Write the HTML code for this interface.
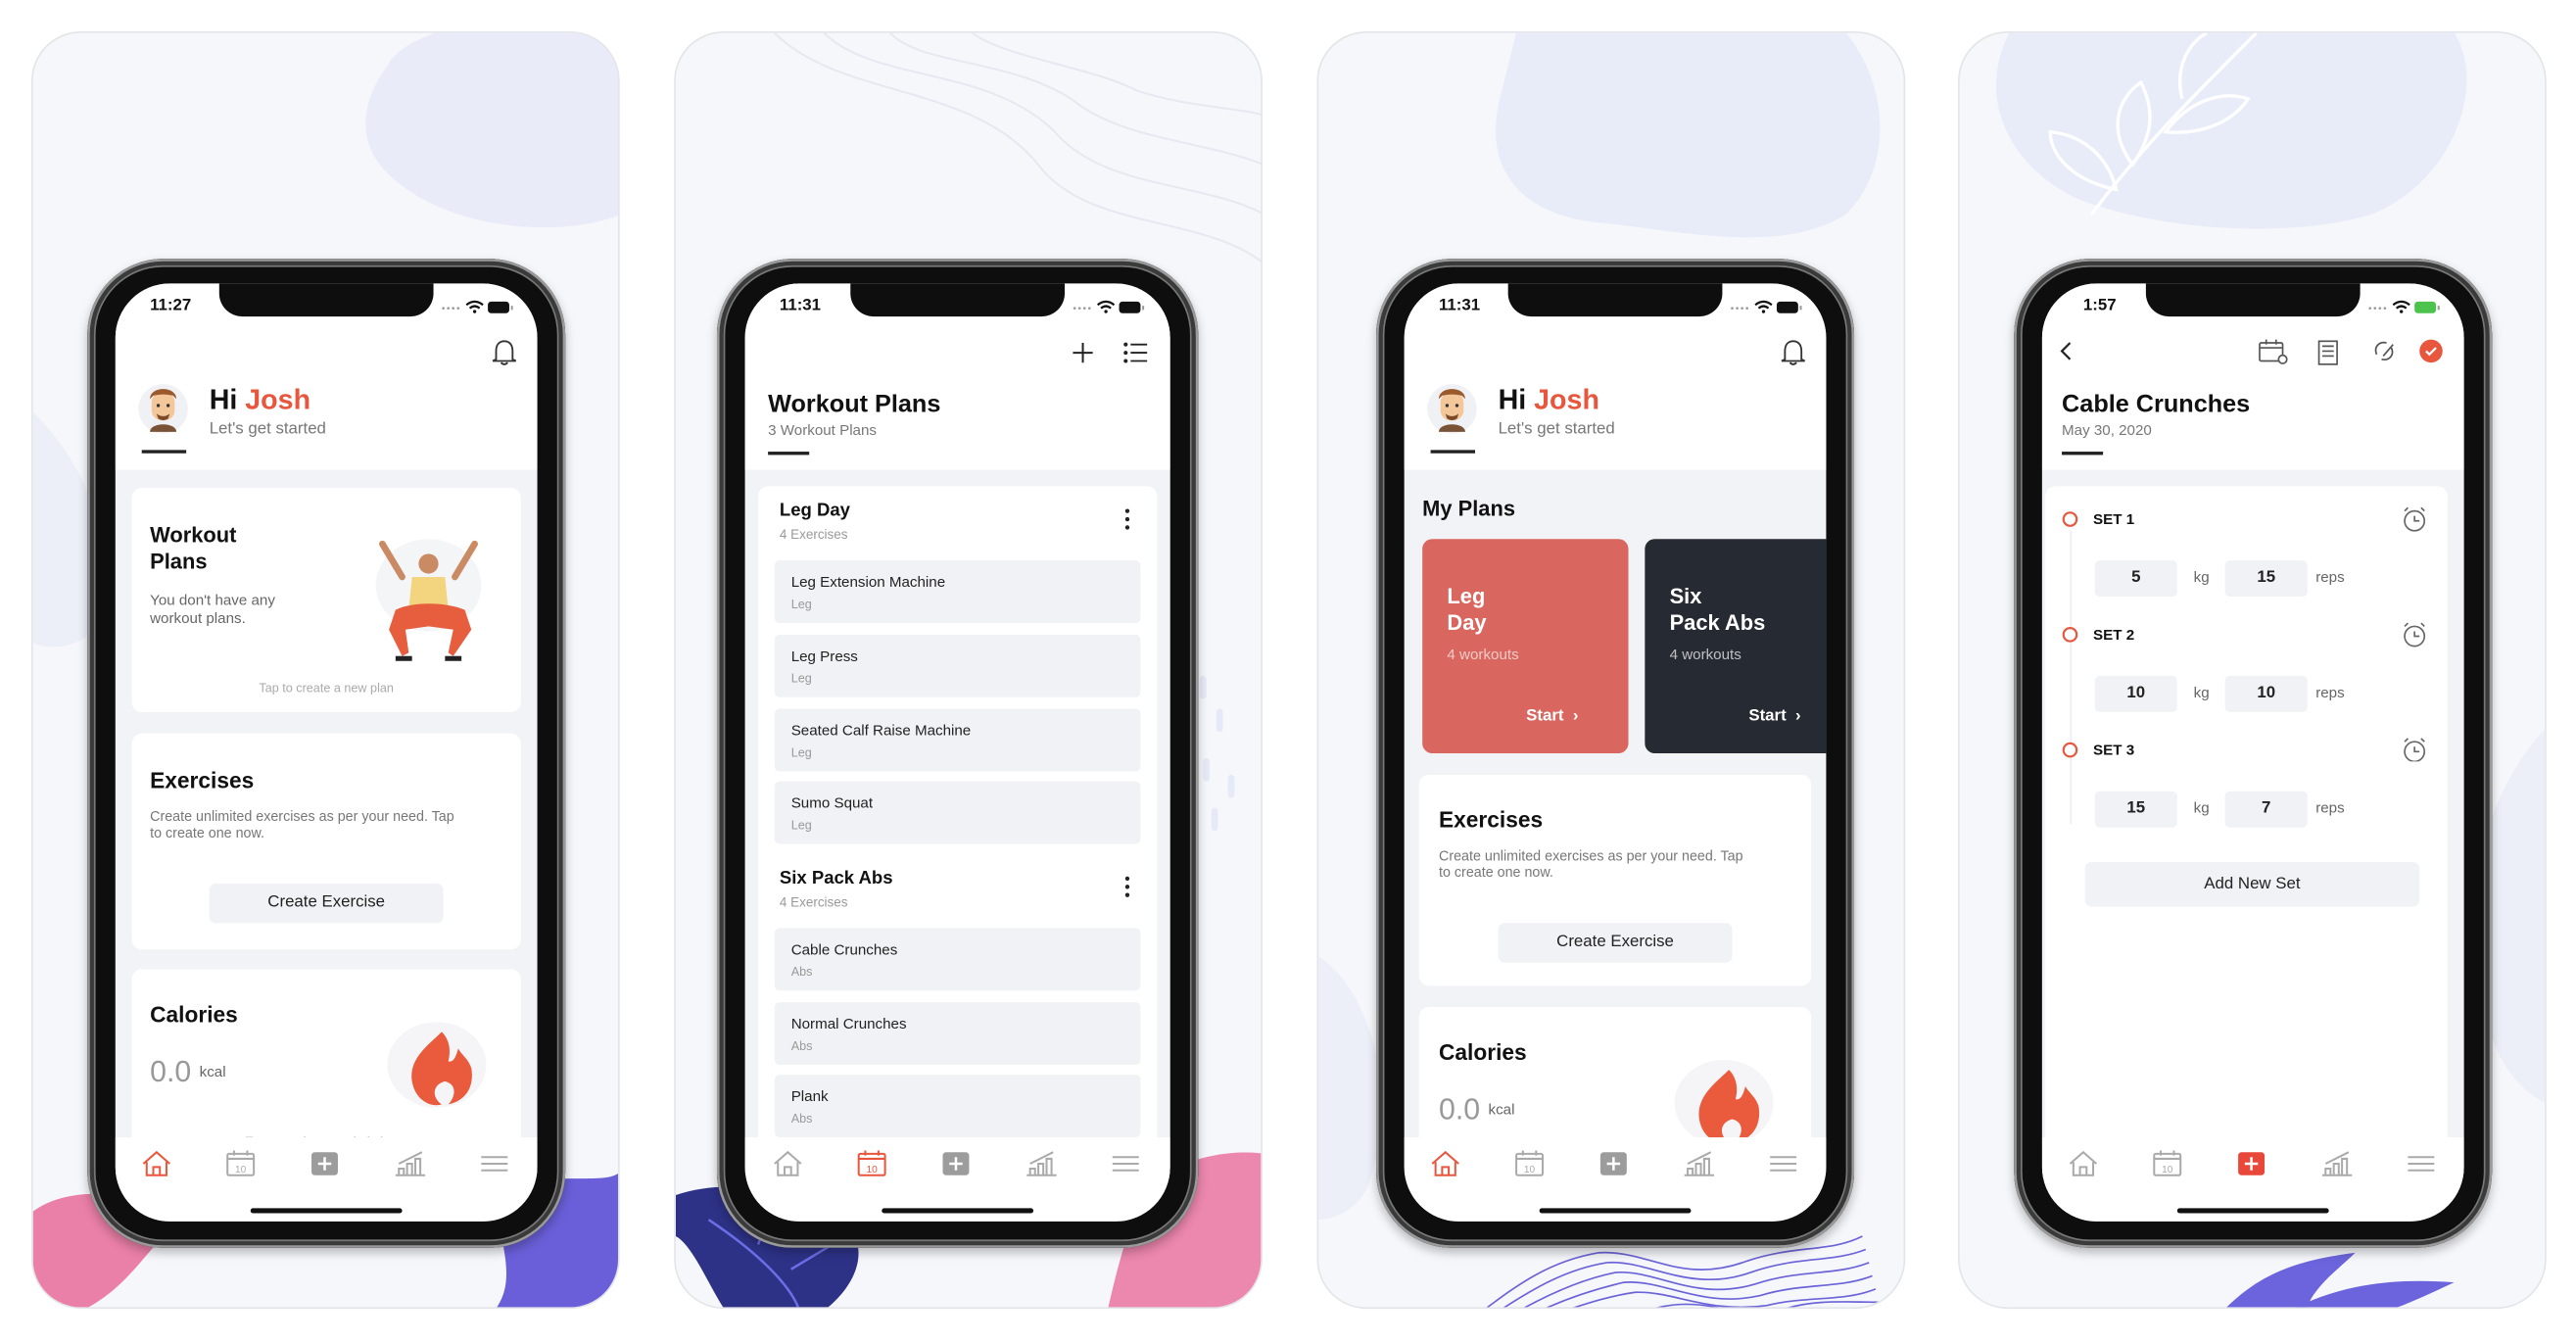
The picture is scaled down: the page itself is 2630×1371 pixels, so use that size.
<!DOCTYPE html>
<html><head><meta charset="utf-8"><style>
*{margin:0;padding:0;box-sizing:border-box}
html,body{width:2630px;height:1370px;overflow:hidden;background:#fff;font-family:"Liberation Sans",sans-serif}
#w{position:absolute;left:0;top:0;width:1563px;height:815px;transform:scale(1.6827);transform-origin:0 0}
.pn{position:absolute;top:19px;width:357px;height:775px;border-radius:30px;background:#f6f7fb;border:1px solid #e4e5ea;overflow:hidden}
.ph{position:absolute;top:157px;width:290px;height:600px;border-radius:46px;background:#0e0e0e;box-shadow:inset 0 0 0 1.5px #9a9a9a,inset 0 0 0 4px #3a3a3a,inset 0 0 0 5px #777,0 3px 6px rgba(0,0,0,.25)}
.sc{position:absolute;left:17px;top:15px;width:256px;height:569px;border-radius:33px;background:#f2f3f7;overflow:hidden}
.a{position:absolute}
.notch{position:absolute;left:63px;top:0;width:130px;height:20px;background:#0e0e0e;border-radius:0 0 14px 14px}
.time{position:absolute;left:21px;top:8px;font-size:10px;font-weight:bold;color:#111}
.hdr{position:absolute;left:0;top:0;width:256px;height:113px;background:#fff}
.card{position:absolute;background:#fff;border-radius:6px}
.b{font-weight:bold;color:#111}
.g{color:#777}
.tab{position:absolute;left:0;top:518px;width:256px;height:51px;background:#fff}
.home{position:absolute;left:82px;top:561px;width:92px;height:3px;border-radius:2px;background:#111}
.item{position:absolute;left:18px;width:222px;height:38px;background:#f1f2f5;border-radius:3px}
.item .n{position:absolute;left:10px;top:8px;font-size:9px;color:#222}
.item .s{position:absolute;left:10px;top:22px;font-size:7.5px;color:#999}
.inp{position:absolute;width:50px;height:22px;background:#f1f2f5;border-radius:3px;font-size:10px;font-weight:bold;color:#222;text-align:center;line-height:22px}
.u{position:absolute;font-size:9px;color:#666}
</style></head><body><div id="w">

<!-- PANEL 1 -->
<div class="pn" style="left:19px">
<svg class="a" style="left:0;top:0" width="357" height="775">
<path d="M215 20 C230 -10 330 -20 357 10 L357 110 C320 125 250 120 215 85 C195 65 200 40 215 20Z" fill="#e9ecf8"/>
<path d="M0 230 C30 260 50 300 40 360 C20 380 0 370 0 370Z" fill="#eceef8"/>
<path d="M0 715 C20 700 60 700 90 720 C70 735 60 760 30 775 L0 775Z" fill="#ea7fa7"/>
<path d="M290 700 C320 690 350 700 357 690 L357 775 L280 775 C300 750 270 715 290 700Z" fill="#6a5fd8"/>
</svg>
</div>
<div class="ph" style="left:53px"><div class="sc">
<div class="hdr"></div>
<div class="notch"></div><div class="time">11:27</div>
<svg class="a" style="left:196px;top:9px" width="50" height="12"><circle cx="3" cy="6" r=".8" fill="#999"/><circle cx="6" cy="6" r=".8" fill="#999"/><circle cx="9" cy="6" r=".8" fill="#999"/><circle cx="12" cy="6" r=".8" fill="#999"/><path d="M17 4 Q22 0 27 4 M19 6 Q22 3.5 25 6" stroke="#111" stroke-width="1.3" fill="none"/><circle cx="22" cy="8" r="1" fill="#111"/><rect x="30" y="2" width="13" height="7" rx="2" fill="#111"/><rect x="44" y="4.5" width="1.2" height="2.5" fill="#999"/></svg>
<svg class="a" style="left:228px;top:33px" width="16" height="18"><path d="M3 13 L3 8 C3 4 5 2 8 2 C11 2 13 4 13 8 L13 13 L15 14 L1 14Z M6 15 Q8 17 10 15" stroke="#333" stroke-width="1.1" fill="none"/></svg>
<svg class="a" style="left:13px;top:58px" width="32" height="36"><circle cx="16" cy="18" r="15" fill="#f0f1f5"/><path d="M8 32 C8 26 24 26 24 32Z" fill="#7a5236"/><rect x="9" y="8" width="14" height="17" rx="6" fill="#f3c79a"/><path d="M8 12 C8 4 24 4 24 12 L22 10 C18 9 14 9 10 10Z" fill="#9b5a2c"/><circle cx="13" cy="16" r="1" fill="#333"/><circle cx="19" cy="16" r="1" fill="#333"/><path d="M12 21 Q16 24 20 21 L19 24 Q16 26 13 24Z" fill="#7a4a2a"/></svg>
<div class="a" style="left:16px;top:101px;width:27px;height:2px;background:#222"></div>
<div class="a b" style="left:57px;top:61px;font-size:17px">Hi <span style="color:#e8573d">Josh</span></div>
<div class="a g" style="left:57px;top:83px;font-size:10px">Let's get started</div>
<div class="card" style="left:10px;top:124px;width:236px;height:136px">
<div class="a b" style="left:11px;top:21px;font-size:13px;line-height:16px">Workout<br>Plans</div>
<div class="a" style="left:11px;top:63px;font-size:9px;color:#666;line-height:11px">You don't have any<br>workout plans.</div>
<div class="a" style="left:0;width:236px;top:117px;font-size:7.5px;color:#aaa;text-align:center">Tap to create a new plan</div>
<svg class="a" style="left:140px;top:14px" width="80" height="100"><ellipse cx="40" cy="45" rx="32" ry="28" fill="#f4f5f7"/><path d="M12 20 L24 40 M68 20 L56 40" stroke="#c98a64" stroke-width="4" stroke-linecap="round"/><circle cx="40" cy="32" r="6" fill="#c98a64"/><path d="M30 40 L50 40 L52 60 L28 60Z" fill="#f2d57e"/><path d="M20 60 C30 55 50 55 62 60 L66 72 L55 88 L52 86 L55 72 L40 70 L26 72 L28 86 L24 88 L16 72Z" fill="#e65e3d"/><rect x="20" y="88" width="10" height="3" fill="#222"/><rect x="50" y="88" width="10" height="3" fill="#222"/></svg>
</div>
<div class="card" style="left:10px;top:273px;width:236px;height:131px">
<div class="a b" style="left:11px;top:21px;font-size:13.5px">Exercises</div>
<div class="a" style="left:11px;top:45px;font-size:8.5px;color:#777;line-height:10px">Create unlimited exercises as per your need. Tap<br>to create one now.</div>
<div class="a" style="left:47px;top:91px;width:142px;height:24px;background:#f1f2f5;border-radius:4px;font-size:10px;color:#222;text-align:center;line-height:24px">Create Exercise</div>
</div>
<div class="card" style="left:10px;top:416px;width:236px;height:110px">
<div class="a b" style="left:11px;top:20px;font-size:13.5px">Calories</div>
<div class="a" style="left:11px;top:52px;font-size:18px;color:#999">0.0 <span style="font-size:9px;color:#666;position:relative;top:-3px">kcal</span></div>
<svg class="a" style="left:150px;top:30px" width="70" height="60"><ellipse cx="35" cy="28" rx="30" ry="26" fill="#f5f5f7"/><path d="M38 8 C30 16 18 24 20 38 C22 50 32 54 38 52 C32 48 32 40 40 38 C48 40 46 48 42 52 C52 50 58 42 56 30 C54 24 50 22 48 18 C46 26 44 26 42 26 C44 18 42 12 38 8Z" fill="#e95b3c"/></svg>
<div class="a" style="left:0;width:236px;top:100px;font-size:7.5px;color:#bbb;text-align:center">Tap to track your calorie input</div>
</div>
<div class="tab"></div>
<svg class="a" style="left:0;top:518px" width="256" height="30"><g fill="none" stroke-width="1.2"><path d="M17 16 L25 9 L33 16 M19 15 V23 H31 V15 M23 23 V18 H27 V23" stroke="#e8573d"/><g stroke="#aaa"><rect x="68" y="10" width="16" height="13" rx="1"/><path d="M68 13 H84 M72 8 V11 M80 8 V11"/><rect x="222" y="12" width="0" height="0"/><path d="M170 23 H188 M172 23 V19 H175 V23 M177 23 V16 H180 V23 M182 23 V13 H185 V23 M172 16 L186 9"/><path d="M222 12 H238 M222 16 H238 M222 20 H238"/></g></g><text x="76" y="21.5" font-size="6" fill="#aaa" text-anchor="middle" font-family="Liberation Sans">10</text><rect x="119" y="9" width="16" height="14" rx="2" fill="#9c9c9c"/><path d="M127 12 V20 M123 16 H131" stroke="#fff" stroke-width="1.5"/></svg>
<div class="home"></div>
</div></div>

<!-- PANEL 2 -->
<div class="pn" style="left:409px">
<svg class="a" style="left:0;top:0" width="357" height="775">
<g fill="none" stroke="#e6e8f2" stroke-width="1.2"><path d="M60 0 C100 40 180 30 220 80 C250 120 320 110 357 140"/><path d="M90 0 C120 30 190 20 230 60 C260 95 320 90 357 110"/><path d="M130 0 C150 20 200 15 240 40 C270 65 320 65 357 80"/><path d="M180 0 C200 15 250 20 280 35 C310 45 340 45 357 50"/></g>
<g fill="#e6e9f6"><rect x="318" y="390" width="4" height="14" rx="2"/><rect x="328" y="410" width="4" height="14" rx="2"/><rect x="320" y="440" width="4" height="14" rx="2"/><rect x="335" y="450" width="4" height="14" rx="2"/><rect x="325" y="470" width="4" height="14" rx="2"/></g>
<path d="M0 705 C30 695 70 700 100 720 C120 735 110 760 90 775 L30 775 C20 760 10 735 0 730Z" fill="#2e3287"/>
<path d="M20 720 C50 740 70 760 75 775 M50 735 L60 710 M70 750 L95 735" stroke="#6c6ee6" stroke-width="1.5" fill="none"/>
<path d="M300 690 C330 675 357 680 357 680 L357 775 L262 775 C270 740 280 700 300 690Z" fill="#ec87ad"/>
</svg>
</div>
<div class="ph" style="left:435px;width:292px"><div class="sc" style="width:258px">
<div class="hdr" style="width:258px"></div>
<div class="notch" style="left:64px"></div><div class="time">11:31</div>
<svg class="a" style="left:197px;top:9px" width="50" height="12"><circle cx="3" cy="6" r=".8" fill="#999"/><circle cx="6" cy="6" r=".8" fill="#999"/><circle cx="9" cy="6" r=".8" fill="#999"/><circle cx="12" cy="6" r=".8" fill="#999"/><path d="M17 4 Q22 0 27 4 M19 6 Q22 3.5 25 6" stroke="#111" stroke-width="1.3" fill="none"/><circle cx="22" cy="8" r="1" fill="#111"/><rect x="30" y="2" width="13" height="7" rx="2" fill="#111"/><rect x="44" y="4.5" width="1.2" height="2.5" fill="#999"/></svg>
<svg class="a" style="left:197px;top:34px" width="50" height="16"><path d="M8 2 V14 M2 8 H14" stroke="#222" stroke-width="1.2"/><g fill="#222"><circle cx="34" cy="3" r="1.2"/><circle cx="34" cy="8" r="1.2"/><circle cx="34" cy="13" r="1.2"/></g><path d="M37 3 H47 M37 8 H47 M37 13 H47" stroke="#222" stroke-width="1.1"/></svg>
<div class="a b" style="left:14px;top:65px;font-size:15px">Workout Plans</div>
<div class="a g" style="left:14px;top:84px;font-size:9px">3 Workout Plans</div>
<div class="a" style="left:14px;top:102px;width:25px;height:2px;background:#222"></div>
<div class="card" style="left:8px;top:123px;width:242px;height:400px"></div>
<div class="a b" style="left:21px;top:132px;font-size:11px">Leg Day</div>
<div class="a g" style="left:21px;top:148px;font-size:8px;color:#999">4 Exercises</div>
<svg class="a" style="left:230px;top:136px" width="4" height="14"><circle cx="2" cy="2" r="1.3" fill="#222"/><circle cx="2" cy="7" r="1.3" fill="#222"/><circle cx="2" cy="12" r="1.3" fill="#222"/></svg>
<div class="item" style="top:168px"><div class="n">Leg Extension Machine</div><div class="s">Leg</div></div>
<div class="item" style="top:213px"><div class="n">Leg Press</div><div class="s">Leg</div></div>
<div class="item" style="top:258px"><div class="n">Seated Calf Raise Machine</div><div class="s">Leg</div></div>
<div class="item" style="top:302px"><div class="n">Sumo Squat</div><div class="s">Leg</div></div>
<div class="a b" style="left:21px;top:355px;font-size:11px">Six Pack Abs</div>
<div class="a g" style="left:21px;top:371px;font-size:8px;color:#999">4 Exercises</div>
<svg class="a" style="left:230px;top:359px" width="4" height="14"><circle cx="2" cy="2" r="1.3" fill="#222"/><circle cx="2" cy="7" r="1.3" fill="#222"/><circle cx="2" cy="12" r="1.3" fill="#222"/></svg>
<div class="item" style="top:391px"><div class="n">Cable Crunches</div><div class="s">Abs</div></div>
<div class="item" style="top:436px"><div class="n">Normal Crunches</div><div class="s">Abs</div></div>
<div class="item" style="top:480px"><div class="n">Plank</div><div class="s">Abs</div></div>
<div class="tab" style="width:258px"></div>
<svg class="a" style="left:1px;top:518px" width="256" height="30"><g fill="none" stroke-width="1.2"><path d="M17 16 L25 9 L33 16 M19 15 V23 H31 V15 M23 23 V18 H27 V23" stroke="#aaa"/><g stroke="#e8573d"><rect x="68" y="10" width="16" height="13" rx="1"/><path d="M68 13 H84 M72 8 V11 M80 8 V11"/></g><g stroke="#aaa"><path d="M170 23 H188 M172 23 V19 H175 V23 M177 23 V16 H180 V23 M182 23 V13 H185 V23 M172 16 L186 9"/><path d="M222 12 H238 M222 16 H238 M222 20 H238"/></g></g><text x="76" y="21.5" font-size="6" fill="#e8573d" text-anchor="middle" font-family="Liberation Sans">10</text><rect x="119" y="9" width="16" height="14" rx="2" fill="#9c9c9c"/><path d="M127 12 V20 M123 16 H131" stroke="#fff" stroke-width="1.5"/></svg>
<div class="home" style="left:83px"></div>
</div></div>

<!-- PANEL 3 -->
<div class="pn" style="left:799px">
<svg class="a" style="left:0;top:0" width="357" height="775">
<path d="M120 0 L320 0 C345 30 350 80 320 110 C280 135 220 120 170 115 C120 110 100 80 110 40Z" fill="#e8ebf8"/>
<path d="M0 560 C30 580 50 640 30 700 C20 720 0 720 0 720Z" fill="#eceef8"/>
<g fill="none" stroke="#6b63d8" stroke-width="1"><path d="M100 775 C120 760 140 745 170 740 C200 738 220 760 260 745 C290 735 310 740 330 730"/><path d="M110 775 C130 762 150 750 175 746 C200 744 225 765 262 752 C290 742 312 746 332 738"/><path d="M122 775 C140 765 160 756 180 752 C205 750 228 770 265 759 C292 750 314 754 334 746"/><path d="M135 775 C150 768 168 762 185 758 C210 756 232 774 268 766 C294 758 316 762 336 754"/><path d="M150 775 C165 770 178 766 192 764 C215 763 236 777 272 772 C296 766 318 770 338 762"/><path d="M200 775 C215 770 230 770 250 775"/><path d="M280 775 C300 768 320 770 340 770"/></g>
</svg>
</div>
<div class="ph" style="left:835px"><div class="sc">
<div class="hdr"></div>
<div class="notch"></div><div class="time">11:31</div>
<svg class="a" style="left:196px;top:9px" width="50" height="12"><circle cx="3" cy="6" r=".8" fill="#999"/><circle cx="6" cy="6" r=".8" fill="#999"/><circle cx="9" cy="6" r=".8" fill="#999"/><circle cx="12" cy="6" r=".8" fill="#999"/><path d="M17 4 Q22 0 27 4 M19 6 Q22 3.5 25 6" stroke="#111" stroke-width="1.3" fill="none"/><circle cx="22" cy="8" r="1" fill="#111"/><rect x="30" y="2" width="13" height="7" rx="2" fill="#111"/><rect x="44" y="4.5" width="1.2" height="2.5" fill="#999"/></svg>
<svg class="a" style="left:228px;top:33px" width="16" height="18"><path d="M3 13 L3 8 C3 4 5 2 8 2 C11 2 13 4 13 8 L13 13 L15 14 L1 14Z M6 15 Q8 17 10 15" stroke="#333" stroke-width="1.1" fill="none"/></svg>
<svg class="a" style="left:13px;top:58px" width="32" height="36"><circle cx="16" cy="18" r="15" fill="#f0f1f5"/><path d="M8 32 C8 26 24 26 24 32Z" fill="#7a5236"/><rect x="9" y="8" width="14" height="17" rx="6" fill="#f3c79a"/><path d="M8 12 C8 4 24 4 24 12 L22 10 C18 9 14 9 10 10Z" fill="#9b5a2c"/><circle cx="13" cy="16" r="1" fill="#333"/><circle cx="19" cy="16" r="1" fill="#333"/><path d="M12 21 Q16 24 20 21 L19 24 Q16 26 13 24Z" fill="#7a4a2a"/></svg>
<div class="a" style="left:16px;top:101px;width:27px;height:2px;background:#222"></div>
<div class="a b" style="left:57px;top:61px;font-size:17px">Hi <span style="color:#e8573d">Josh</span></div>
<div class="a g" style="left:57px;top:83px;font-size:10px">Let's get started</div>
<div class="a b" style="left:11px;top:129px;font-size:13px">My Plans</div>
<div class="a" style="left:11px;top:155px;width:125px;height:130px;background:#d96760;border-radius:6px">
<div class="a" style="left:15px;top:27px;font-size:13px;font-weight:bold;color:#fff;line-height:16px">Leg<br>Day</div>
<div class="a" style="left:15px;top:65px;font-size:9px;color:rgba(255,255,255,.65)">4 workouts</div>
<div class="a" style="left:63px;top:102px;font-size:10px;font-weight:bold;color:#fff">Start &nbsp;›</div>
</div>
<div class="a" style="left:146px;top:155px;width:125px;height:130px;background:#262a32;border-radius:6px">
<div class="a" style="left:15px;top:27px;font-size:13px;font-weight:bold;color:#fff;line-height:16px">Six<br>Pack Abs</div>
<div class="a" style="left:15px;top:65px;font-size:9px;color:rgba(255,255,255,.7)">4 workouts</div>
<div class="a" style="left:63px;top:102px;font-size:10px;font-weight:bold;color:#fff">Start &nbsp;›</div>
</div>
<div class="card" style="left:9px;top:298px;width:238px;height:128px">
<div class="a b" style="left:12px;top:20px;font-size:13.5px">Exercises</div>
<div class="a" style="left:12px;top:44px;font-size:8.5px;color:#777;line-height:10px">Create unlimited exercises as per your need. Tap<br>to create one now.</div>
<div class="a" style="left:48px;top:90px;width:142px;height:24px;background:#f1f2f5;border-radius:4px;font-size:10px;color:#222;text-align:center;line-height:24px">Create Exercise</div>
</div>
<div class="card" style="left:9px;top:439px;width:238px;height:110px">
<div class="a b" style="left:12px;top:20px;font-size:13.5px">Calories</div>
<div class="a" style="left:12px;top:52px;font-size:18px;color:#999">0.0 <span style="font-size:9px;color:#666;position:relative;top:-3px">kcal</span></div>
<svg class="a" style="left:150px;top:30px" width="70" height="60"><ellipse cx="35" cy="28" rx="30" ry="26" fill="#f5f5f7"/><path d="M38 8 C30 16 18 24 20 38 C22 50 32 54 38 52 C32 48 32 40 40 38 C48 40 46 48 42 52 C52 50 58 42 56 30 C54 24 50 22 48 18 C46 26 44 26 42 26 C44 18 42 12 38 8Z" fill="#e95b3c"/></svg>
</div>
<div class="tab"></div>
<svg class="a" style="left:0;top:518px" width="256" height="30"><g fill="none" stroke-width="1.2"><path d="M17 16 L25 9 L33 16 M19 15 V23 H31 V15 M23 23 V18 H27 V23" stroke="#e8573d"/><g stroke="#aaa"><rect x="68" y="10" width="16" height="13" rx="1"/><path d="M68 13 H84 M72 8 V11 M80 8 V11"/><path d="M170 23 H188 M172 23 V19 H175 V23 M177 23 V16 H180 V23 M182 23 V13 H185 V23 M172 16 L186 9"/><path d="M222 12 H238 M222 16 H238 M222 20 H238"/></g></g><text x="76" y="21.5" font-size="6" fill="#aaa" text-anchor="middle" font-family="Liberation Sans">10</text><rect x="119" y="9" width="16" height="14" rx="2" fill="#9c9c9c"/><path d="M127 12 V20 M123 16 H131" stroke="#fff" stroke-width="1.5"/></svg>
<div class="home"></div>
</div></div>

<!-- PANEL 4 -->
<div class="pn" style="left:1188px">
<svg class="a" style="left:0;top:0" width="357" height="775">
<path d="M30 0 L300 0 C320 30 300 90 250 110 C200 125 120 120 70 100 C30 80 10 40 30 0Z" fill="#e8ebf8"/>
<g fill="none" stroke="#fff" stroke-width="2"><path d="M80 110 C110 70 140 40 180 0"/><path d="M105 80 C90 60 95 40 110 30 C120 50 115 65 105 80Z"/><path d="M125 60 C140 40 160 35 175 40 C165 55 145 62 125 60Z"/><path d="M135 40 C130 20 140 5 150 0"/><path d="M95 95 C70 90 55 75 55 60 C75 62 90 75 95 95Z"/></g>
<path d="M357 420 C320 460 300 520 320 600 C330 640 357 650 357 650Z" fill="#eceef8"/>
<path d="M160 775 C180 755 200 745 240 740 C230 750 215 760 210 775Z" fill="#6b64dc"/>
<path d="M200 775 C230 760 260 755 300 758 C285 765 270 772 260 775Z" fill="#6b64dc"/>
</svg>
</div>
<div class="ph" style="left:1222px"><div class="sc">
<div class="hdr"></div>
<div class="notch"></div><div class="time" style="left:25px">1:57</div>
<svg class="a" style="left:196px;top:9px" width="50" height="12"><circle cx="3" cy="6" r=".8" fill="#999"/><circle cx="6" cy="6" r=".8" fill="#999"/><circle cx="9" cy="6" r=".8" fill="#999"/><circle cx="12" cy="6" r=".8" fill="#999"/><path d="M17 4 Q22 0 27 4 M19 6 Q22 3.5 25 6" stroke="#111" stroke-width="1.3" fill="none"/><circle cx="22" cy="8" r="1" fill="#111"/><rect x="30" y="2" width="13" height="7" rx="2" fill="#4cc34c"/><rect x="44" y="4.5" width="1.2" height="2.5" fill="#999"/></svg>
<svg class="a" style="left:8px;top:33px" width="240" height="18"><path d="M9 3 L4 8 L9 13" stroke="#222" stroke-width="1.3" fill="none"/><g stroke="#555" stroke-width="1" fill="none"><rect x="124" y="3" width="14" height="11" rx="1"/><path d="M124 6 H138 M128 1 V4 M134 1 V4"/><circle cx="138" cy="13" r="2.5" fill="#fff"/><rect x="160" y="2" width="11" height="14"/><path d="M162 5 H169 M162 8 H169 M162 11 H169"/><path d="M195 10 C193 5 197 2 201 3 M204 6 C206 11 202 14 198 13 M199 11 L205 4"/></g><circle cx="228" cy="8" r="7" fill="#e8573d"/><path d="M225 8 L227 10 L231 6" stroke="#fff" stroke-width="1.3" fill="none"/></svg>
<div class="a b" style="left:12px;top:65px;font-size:15px">Cable Crunches</div>
<div class="a g" style="left:12px;top:84px;font-size:9px">May 30, 2020</div>
<div class="a" style="left:12px;top:102px;width:25px;height:2px;background:#222"></div>
<div class="card" style="left:2px;top:123px;width:244px;height:400px"></div>
<div class="a" style="left:17px;top:150px;width:1px;height:178px;background:#eee"></div>
<svg class="a" style="left:0;top:130px" width="256" height="160"><g fill="#fff" stroke="#e8573d" stroke-width="1.3"><circle cx="17" cy="13" r="4"/><circle cx="17" cy="83" r="4"/><circle cx="17" cy="153" r="4"/></g><g stroke="#666" fill="none" stroke-width="1"><circle cx="226" cy="14" r="6"/><path d="M226 11 V14 H229 M220 8 L222 6 M232 8 L230 6"/><circle cx="226" cy="84" r="6"/><path d="M226 81 V84 H229 M220 78 L222 76 M232 78 L230 76"/><circle cx="226" cy="154" r="6"/><path d="M226 151 V154 H229 M220 148 L222 146 M232 148 L230 146"/></g></svg>
<div class="a b" style="left:31px;top:138px;font-size:9px">SET 1</div>
<div class="a b" style="left:31px;top:208px;font-size:9px">SET 2</div>
<div class="a b" style="left:31px;top:278px;font-size:9px">SET 3</div>
<div class="inp" style="left:32px;top:168px">5</div><div class="u" style="left:92px;top:173px">kg</div><div class="inp" style="left:111px;top:168px">15</div><div class="u" style="left:166px;top:173px">reps</div>
<div class="inp" style="left:32px;top:238px">10</div><div class="u" style="left:92px;top:243px">kg</div><div class="inp" style="left:111px;top:238px">10</div><div class="u" style="left:166px;top:243px">reps</div>
<div class="inp" style="left:32px;top:308px">15</div><div class="u" style="left:92px;top:313px">kg</div><div class="inp" style="left:111px;top:308px">7</div><div class="u" style="left:166px;top:313px">reps</div>
<div class="a" style="left:26px;top:351px;width:203px;height:27px;background:#f1f2f5;border-radius:4px;font-size:10px;color:#222;text-align:center;line-height:27px">Add New Set</div>
<div class="tab"></div>
<svg class="a" style="left:0;top:518px" width="256" height="30"><g fill="none" stroke-width="1.2"><g stroke="#aaa"><path d="M17 16 L25 9 L33 16 M19 15 V23 H31 V15 M23 23 V18 H27 V23"/><rect x="68" y="10" width="16" height="13" rx="1"/><path d="M68 13 H84 M72 8 V11 M80 8 V11"/><path d="M170 23 H188 M172 23 V19 H175 V23 M177 23 V16 H180 V23 M182 23 V13 H185 V23 M172 16 L186 9"/><path d="M222 12 H238 M222 16 H238 M222 20 H238"/></g></g><text x="76" y="21.5" font-size="6" fill="#aaa" text-anchor="middle" font-family="Liberation Sans">10</text><rect x="119" y="9" width="16" height="14" rx="2" fill="#e8473a"/><path d="M127 12 V20 M123 16 H131" stroke="#fff" stroke-width="1.5"/></svg>
<div class="home"></div>
</div></div>

</div></body></html>
